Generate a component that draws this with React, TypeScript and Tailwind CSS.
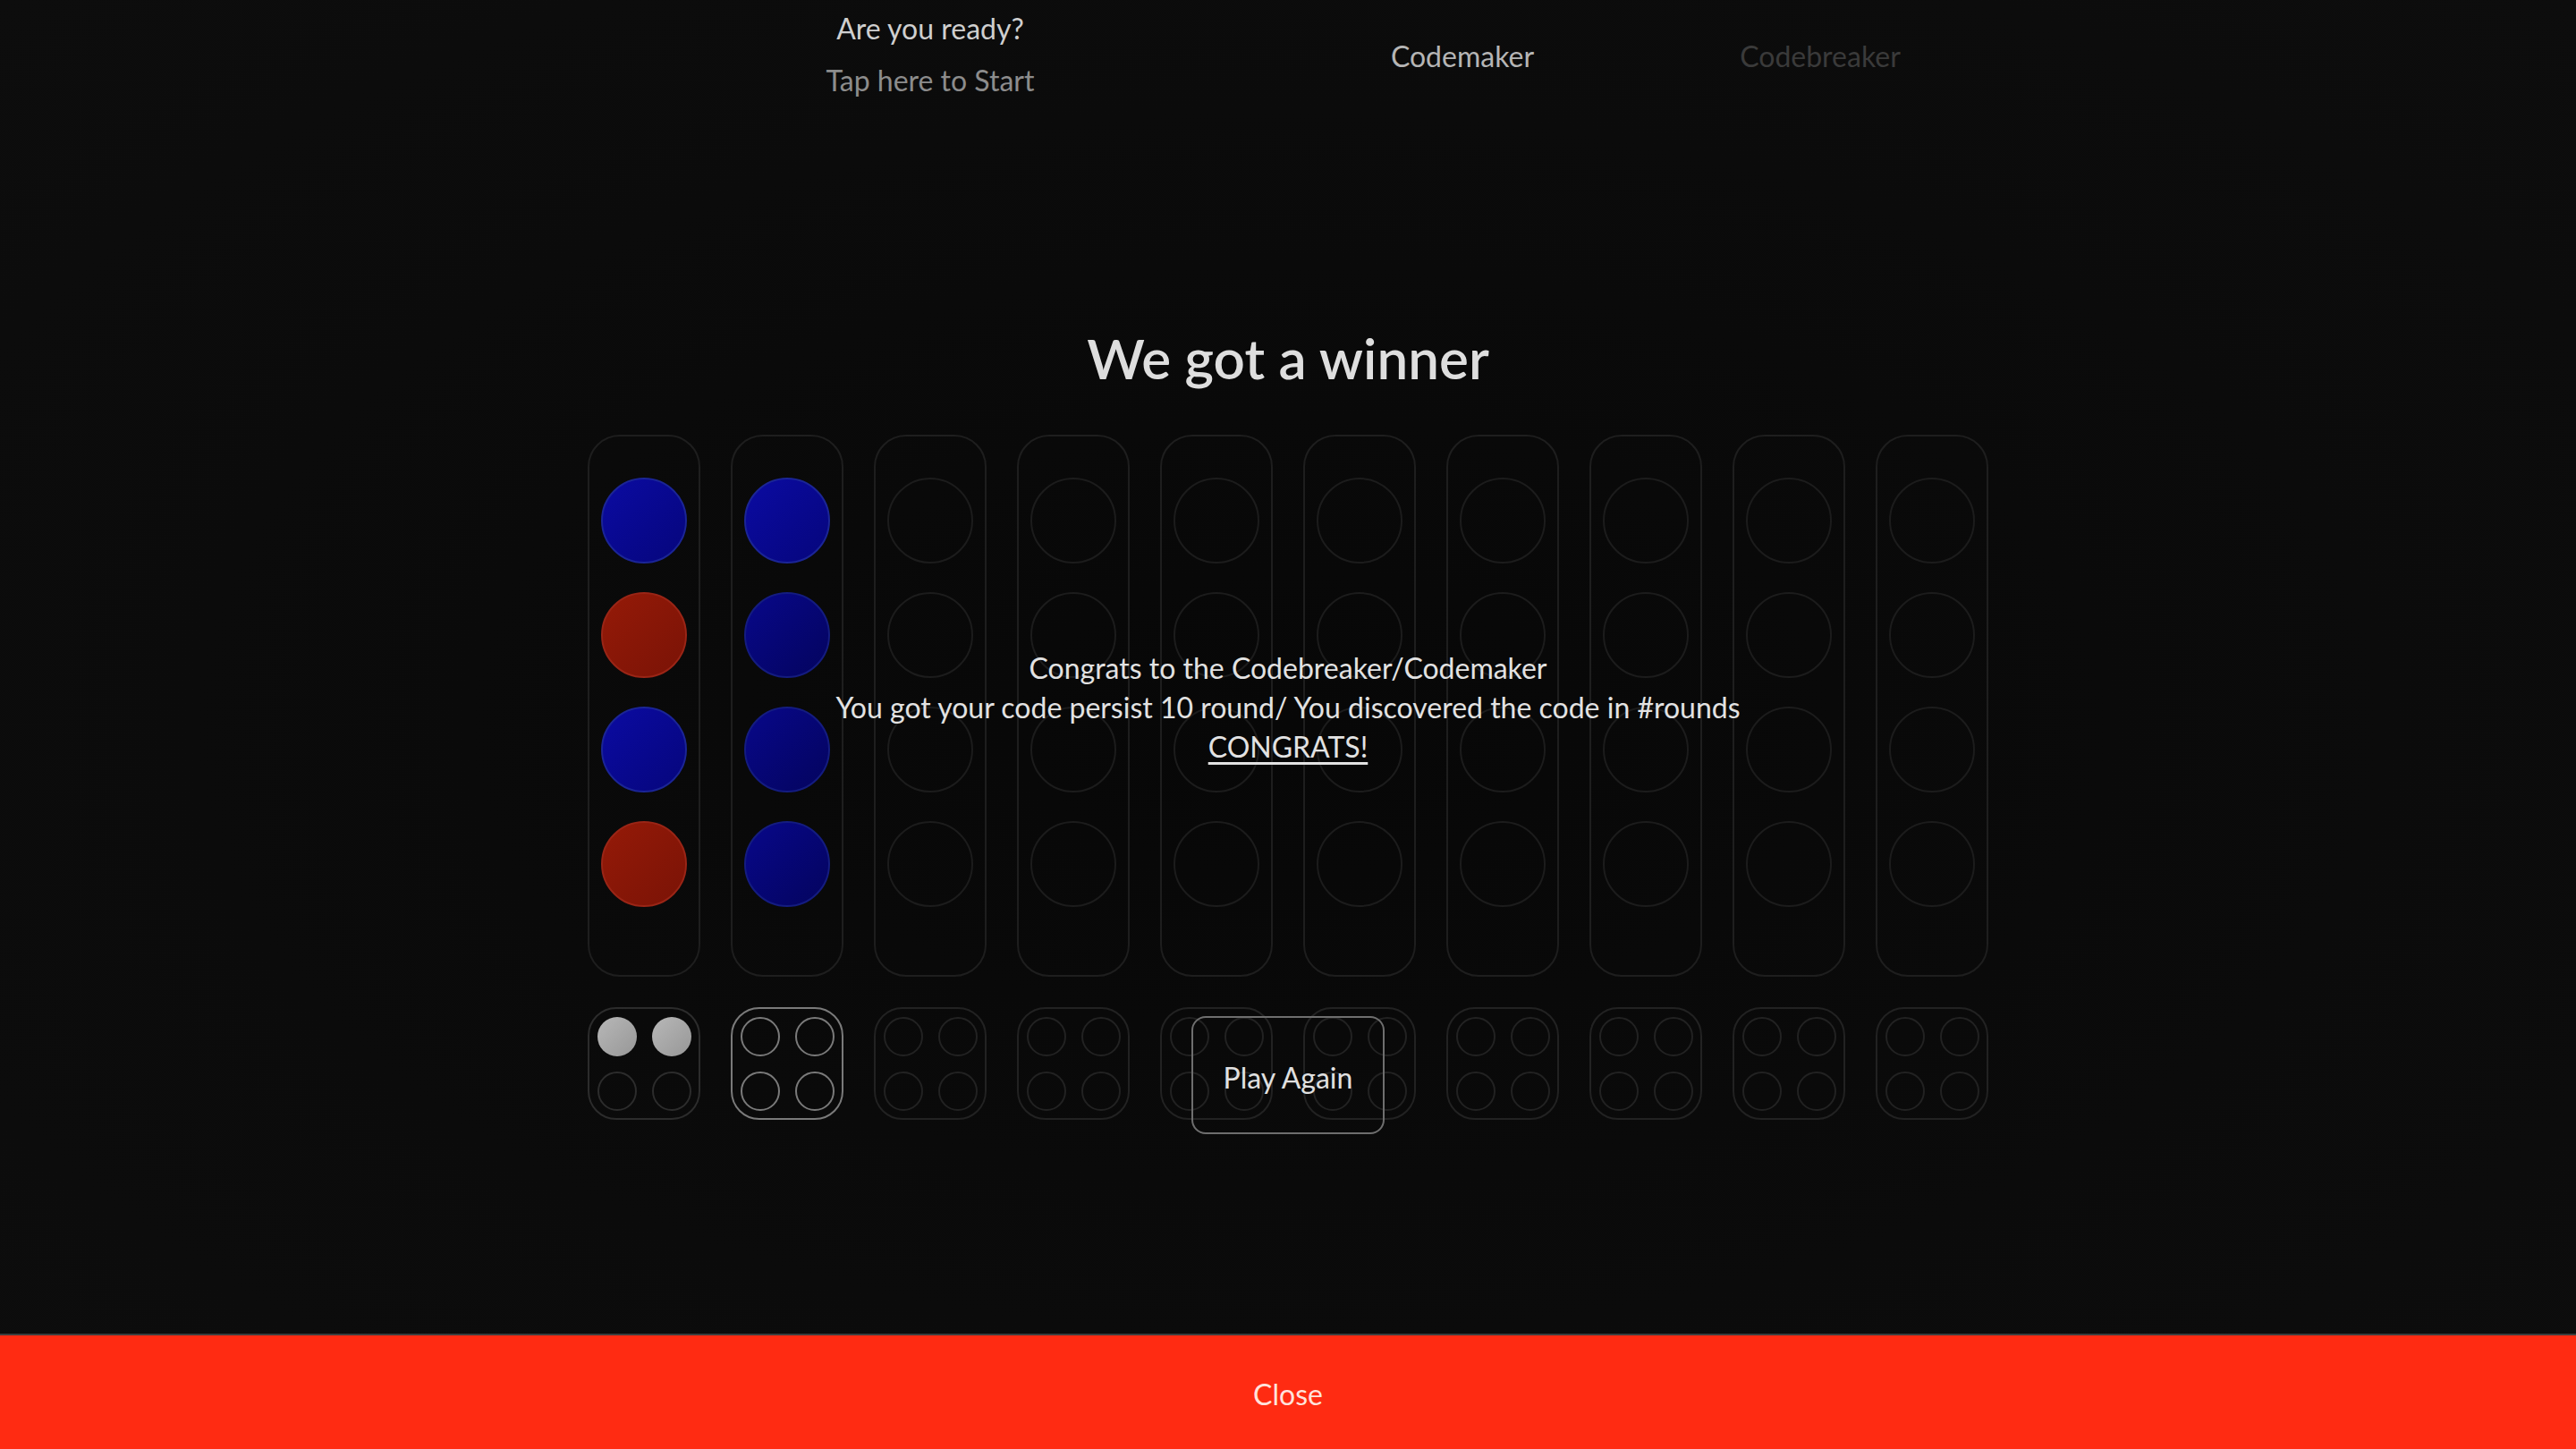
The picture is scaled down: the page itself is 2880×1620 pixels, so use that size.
import React from 'react';

type Peg = 'blue' | 'blueDim' | 'red' | null;

const columns: Peg[][] = [
  ['blue', 'red', 'blue', 'red'],
  ['blue', 'blueDim', 'blueDim', 'blueDim'],
  ...Array.from({ length: 8 }, () => [null, null, null, null] as Peg[]),
];

const pegClass: Record<string, string> = {
  blue: 'bg-gradient-to-br from-[#0b0ba2] to-[#06067c] border-2 border-[#1b2596]',
  blueDim: 'bg-gradient-to-br from-[#08088a] to-[#04045e] border-2 border-[#141c80]',
  red: 'bg-gradient-to-br from-[#951a08] to-[#7a1306] border-2 border-[#9a2516]',
};

const Slot: React.FC<{ peg: Peg }> = ({ peg }) => (
  <div
    className={`w-[96px] h-[96px] rounded-full ${
      peg ? pegClass[peg] : 'border-2 border-[#1c1c1c]'
    }`}
  />
);

const Feedback: React.FC<{ idx: number }> = ({ idx }) => {
  const active = idx === 1;
  const line = active ? 'border-[#7a7a7a]' : idx === 0 ? 'border-[#2c2c2c]' : 'border-[#222]';
  return (
    <div className={`w-[126px] h-[126px] rounded-[32px] border-2 ${line} grid grid-cols-[44px_44px] place-content-center gap-[17px]`}>
      {[0, 1, 2, 3].map((k) => {
        const filled = idx === 0 && k < 2;
        return (
          <div
            key={k}
            className={`w-[44px] h-[44px] rounded-full ${
              filled ? 'bg-gradient-to-br from-[#b8b8b8] to-[#979797]' : `border-2 ${line}`
            }`}
          />
        );
      })}
    </div>
  );
};

export default function App() {
  return (
    <div
      className="h-screen w-full flex flex-col bg-[radial-gradient(ellipse_at_center,#070707_0%,#0b0b0b_60%,#0d0d0d_100%)] text-[#ddd]"
      style={{ fontFamily: 'Lato, "Open Sans", sans-serif' }}
    >
      <div className="flex-1 flex flex-col">
        {/* Header */}
        <div className="flex items-center pl-[840px] h-[124px] -mt-[1px]">
          <div className="w-[400px] flex flex-col items-center">
            <span className="text-[32px] leading-[58px] text-[#cfcfcf]">Are you ready?</span>
            <span className="text-[32px] leading-[58px] text-[#8c8c8c]">Tap here to Start</span>
          </div>
          <div className="ml-[195px] w-[400px] text-center text-[32px] text-[#b5b5b5] mt-[3px]">Codemaker</div>
          <div className="w-[400px] text-center text-[32px] text-[#3a3a3a] mt-[3px]">Codebreaker</div>
        </div>

        <h1 className="mt-[237px] text-center text-[62px] leading-[80px] font-semibold text-[#dedede]">
          We got a winner
        </h1>

        {/* Board */}
        <div className="relative mx-auto mt-[46px] flex flex-col gap-[34px]">
          <div className="flex gap-[34px]">
            {columns.map((col, i) => (
              <div
                key={i}
                className="w-[126px] h-[606px] rounded-[36px] border-2 border-[#1e1e1e] flex flex-col items-center gap-[32px] pt-[46px]"
              >
                {col.map((p, j) => (
                  <Slot key={j} peg={p} />
                ))}
              </div>
            ))}
          </div>
          <div className="flex gap-[34px]">
            {columns.map((_, i) => (
              <Feedback key={i} idx={i} />
            ))}
          </div>

          {/* Winner overlay */}
          <div className="absolute left-0 right-0 top-[239px] flex flex-col items-center text-[32px] leading-[44px] text-[#e2e2e2]">
            <span>Congrats to the Codebreaker/Codemaker</span>
            <span>You got your code persist 10 round/ You discovered the code in #rounds</span>
            <span className="underline underline-offset-[5px]">CONGRATS!</span>
          </div>
          <button className="absolute left-1/2 -translate-x-1/2 top-[650px] w-[216px] h-[132px] rounded-[16px] border-2 border-[#6e6e6e] text-[32px] text-[#e0e0e0] pt-[6px]">
            Play Again
          </button>
        </div>
      </div>

      {/* Close bar */}
      <div className="h-[129px] border-t-2 border-[#3d3d3d] bg-[#ff2b12] flex items-center justify-center pt-[5px]">
        <span className="text-[32px] text-[#ffe2dc]">Close</span>
      </div>
    </div>
  );
}
